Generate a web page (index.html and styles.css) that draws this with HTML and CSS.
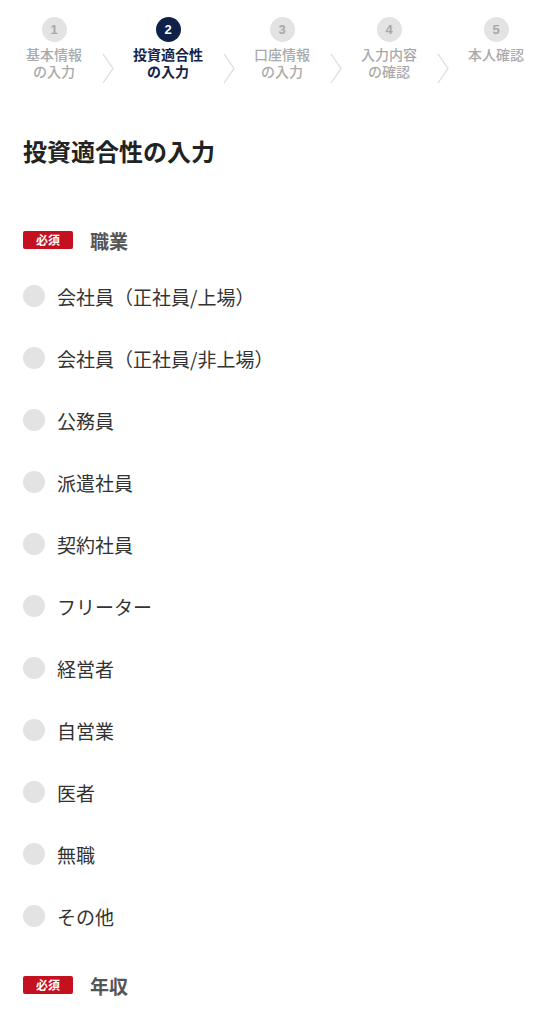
FILE: index.html
```html
<!DOCTYPE html>
<html lang="ja">
<head>
<meta charset="UTF-8">
<meta name="viewport" content="width=device-width, initial-scale=1.0">
<title>投資適合性の入力</title>
<link rel="stylesheet" href="styles.css">
</head>
<body>

<!-- ステップ表示 -->
<nav class="steps">
    <div class="step">
        <span class="step-num">1</span>
        <span class="step-label">基本情報</span>
        <span class="step-label">の入力</span>
    </div>
    <span class="step-arrow"><svg width="12" height="31" viewBox="0 0 12 31"><path d="M1 1 L11 15.5 L1 30" fill="none" stroke="#dcdcdc" stroke-width="1.3"/></svg></span>
    <div class="step active">
        <span class="step-num">2</span>
        <span class="step-label">投資適合性</span>
        <span class="step-label">の入力</span>
    </div>
    <span class="step-arrow"><svg width="12" height="31" viewBox="0 0 12 31"><path d="M1 1 L11 15.5 L1 30" fill="none" stroke="#dcdcdc" stroke-width="1.3"/></svg></span>
    <div class="step">
        <span class="step-num">3</span>
        <span class="step-label">口座情報</span>
        <span class="step-label">の入力</span>
    </div>
    <span class="step-arrow"><svg width="12" height="31" viewBox="0 0 12 31"><path d="M1 1 L11 15.5 L1 30" fill="none" stroke="#dcdcdc" stroke-width="1.3"/></svg></span>
    <div class="step">
        <span class="step-num">4</span>
        <span class="step-label">入力内容</span>
        <span class="step-label">の確認</span>
    </div>
    <span class="step-arrow"><svg width="12" height="31" viewBox="0 0 12 31"><path d="M1 1 L11 15.5 L1 30" fill="none" stroke="#dcdcdc" stroke-width="1.3"/></svg></span>
    <div class="step">
        <span class="step-num">5</span>
        <span class="step-label">本人確認</span>
    </div>
</nav>

<main>
    <h1 class="page-title">投資適合性の入力</h1>

    <!-- 職業 -->
    <section class="field">
        <div class="field-label">
            <span class="required">必須</span>
            <span class="field-name">職業</span>
        </div>
        <ul class="radio-list">
            <li class="radio-item"><span class="radio"></span>会社員（正社員/上場）</li>
            <li class="radio-item"><span class="radio"></span>会社員（正社員/非上場）</li>
            <li class="radio-item"><span class="radio"></span>公務員</li>
            <li class="radio-item"><span class="radio"></span>派遣社員</li>
            <li class="radio-item"><span class="radio"></span>契約社員</li>
            <li class="radio-item"><span class="radio"></span>フリーター</li>
            <li class="radio-item"><span class="radio"></span>経営者</li>
            <li class="radio-item"><span class="radio"></span>自営業</li>
            <li class="radio-item"><span class="radio"></span>医者</li>
            <li class="radio-item"><span class="radio"></span>無職</li>
            <li class="radio-item"><span class="radio"></span>その他</li>
        </ul>
    </section>

    <!-- 年収 -->
    <section class="field field-next">
        <div class="field-label">
            <span class="required">必須</span>
            <span class="field-name">年収</span>
        </div>
    </section>
</main>

</body>
</html>
```

FILE: styles.css
```css
body {
    margin: 0;
    padding: 0;
    background-color: #fff;
    color: #333;
    font-family: "Noto Sans CJK JP", "Noto Sans", sans-serif;
}

/* ステップ表示 */
.steps {
    display: flex;
    justify-content: space-between;
    align-items: flex-start;
    padding: 17px 26px 0;
}

.step {
    display: flex;
    flex-direction: column;
    align-items: center;
}

.step-num {
    width: 25px;
    height: 25px;
    margin-bottom: 4px;
    border-radius: 50%;
    background-color: #e3e3e3;
    color: #a8a8a8;
    font-family: "Liberation Sans", Arial, sans-serif;
    font-size: 13px;
    font-weight: bold;
    line-height: 25px;
    text-align: center;
}

.step-label {
    display: block;
    font-size: 14px;
    line-height: 17px;
    font-weight: 500;
    color: #aaa;
    text-align: center;
    white-space: nowrap;
}

.step.active .step-num {
    background-color: #0f2148;
    color: #fff;
}

.step.active .step-label {
    color: #13244a;
    font-weight: bold;
}

.step-arrow {
    margin-top: 36px;
    display: block;
}

.step-arrow svg {
    display: block;
}

/* 本文 */
main {
    padding: 0 23px;
}

.page-title {
    margin: 50px 0 0;
    font-size: 24px;
    line-height: 34px;
    font-weight: bold;
    color: #222;
}

.field {
    margin-top: 59px;
}

.field-label {
    display: flex;
    align-items: center;
    height: 26px;
}

.required {
    display: inline-block;
    width: 50px;
    height: 18px;
    border-radius: 2px;
    background-color: #c5101f;
    color: #fff;
    font-size: 12px;
    font-weight: bold;
    line-height: 18px;
    text-align: center;
}

.field-name {
    margin-left: 17px;
    font-size: 19px;
    font-weight: bold;
    color: #555;
}

.radio-list {
    list-style: none;
    margin: 12px 0 0;
    padding: 0;
}

.radio-item {
    display: flex;
    align-items: center;
    height: 62px;
    font-size: 19px;
    color: #333;
}

.radio {
    width: 22px;
    height: 22px;
    border-radius: 50%;
    background-color: #e3e3e3;
    margin-right: 12px;
    flex-shrink: 0;
}

.field-next {
    margin-top: 25px;
}
```
